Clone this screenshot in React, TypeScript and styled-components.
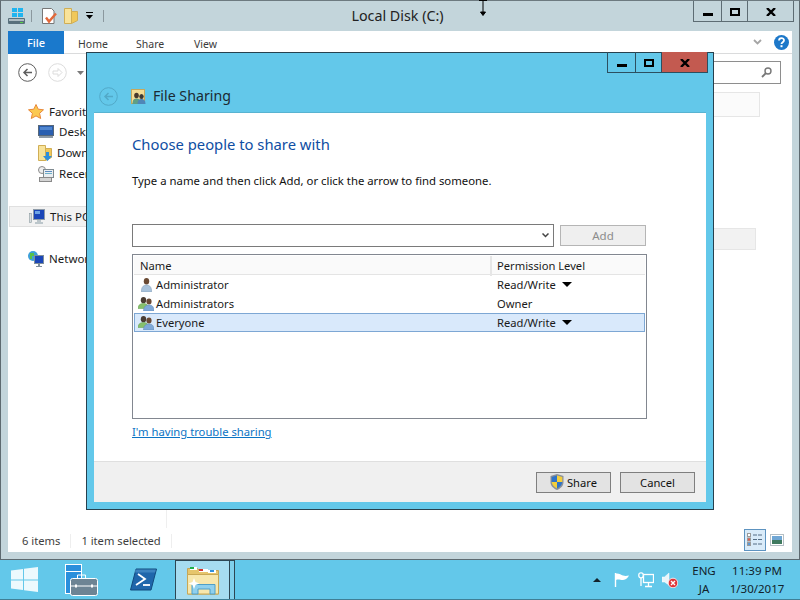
import * as React from "react";
import styled, { createGlobalStyle } from "styled-components";

const GlobalStyle = createGlobalStyle`
  html, body {
    margin: 0;
    padding: 0;
    width: 800px;
    height: 600px;
    overflow: hidden;
  }
  body {
    font-family: "Noto Sans", "Open Sans", sans-serif;
    font-size: 11.2px;
    color: #1a1a1a;
  }
  * { box-sizing: border-box; }
  svg { flex: none; display: block; }
`;

const Desktop = styled.div`
  position: relative;
  width: 800px;
  height: 600px;
  display: flex;
  flex-direction: column;
  background: #63c8ea;
  overflow: hidden;
`;

/* explorer window behind the dialog */
const Explorer = styled.div`
  height: 560px;
  background: #c3d5db;
  border: 1px solid #5e6a70;
  border-top-color: #6d7a80;
  display: flex;
  flex-direction: column;
  padding: 0 7px 7px 7px;
`;

const TitleBar = styled.div`
  height: 30px;
  display: grid;
  grid-template-columns: 1fr auto 1fr;
  align-items: start;
`;

const Qat = styled.div`
  display: flex;
  align-items: center;
  height: 30px;
  padding-bottom: 1px;
`;

const QatSep = styled.span<{ $ml: number }>`
  width: 1px;
  height: 12px;
  background: #8b989e;
  margin-left: ${p => p.$ml}px;
`;

const QatSlot = styled.span<{ $ml: number }>`
  display: block;
  margin-left: ${p => p.$ml}px;
`;

const WindowTitle = styled.div`
  font-size: 14.3px;
  line-height: 29px;
  color: #222;
  margin-left: -5px;
`;

const CaptionGroup = styled.div`
  justify-self: end;
  display: flex;
  height: 21px;
  margin-right: -2px;
  color: #5d6c73;
  border: 1px solid currentColor;
  border-top: none;
`;

const CaptionBtn = styled.div<{ $w: number; $close?: boolean }>`
  width: ${p => p.$w}px;
  padding-top: 1px;
  display: flex;
  align-items: center;
  justify-content: center;
  background: ${p => (p.$close ? "#c35a50" : "transparent")};
  & + & { border-left: 1px solid currentColor; }
`;

const Ribbon = styled.div`
  height: 23px;
  display: flex;
  align-items: stretch;
  background: #fff;
  border-bottom: 1px solid #dadbdc;
`;

const FileTab = styled.div`
  width: 56px;
  margin-bottom: -1px;
  background: #1a79cc;
  color: #fff;
  display: flex;
  align-items: center;
  justify-content: center;
  font-size: 11px;
  font-weight: 500;
`;

const RibbonTab = styled.div`
  width: 58px;
  padding-left: 14px;
  padding-top: 6px;
  font-size: 10.5px;
  color: #3b3b3b;
`;

const RibbonRight = styled.div`
  margin-left: auto;
  display: flex;
  align-items: center;
  gap: 12px;
  padding-right: 3px;
`;

const ExplorerBody = styled.div`
  flex: 1;
  background: #fff;
  display: flex;
  flex-direction: column;
  min-height: 0;
`;

const NavRow = styled.div`
  height: 38px;
  display: flex;
  align-items: center;
  padding: 0 11px 1px 10px;
`;

const NavSlot = styled.span<{ $ml: number }>`
  display: block;
  margin-left: ${p => p.$ml}px;
`;

const SearchBox = styled.div`
  margin-left: auto;
  width: 70px;
  height: 23px;
  border: 1px solid #8e8e8e;
  display: flex;
  align-items: center;
  justify-content: flex-end;
  padding-right: 8px;
`;

const Main = styled.div`
  flex: 1;
  display: flex;
  min-height: 0;
`;

const Sidebar = styled.div`
  width: 159px;
  padding-top: 9px;
  display: flex;
  flex-direction: column;
  border-right: 1px solid #efefef;
`;

const NavItem = styled.div<{ $top?: number; $active?: boolean; $indent?: boolean }>`
  height: 21px;
  margin-top: ${p => p.$top ?? 0}px;
  margin-left: ${p => (p.$active ? 1 : 0)}px;
  padding-left: ${p => (p.$active ? 19 : p.$indent ? 30 : 20)}px;
  display: flex;
  align-items: center;
  gap: 5px;
  white-space: nowrap;
  font-size: 11.5px;
  background: ${p => (p.$active ? "#f2f2f2" : "transparent")};
  border: ${p => (p.$active ? "1px solid #e0e0e0" : "none")};
  border-right: none;
`;

const FilePane = styled.div`
  flex: 1;
  display: flex;
  flex-direction: column;
  align-items: flex-end;
`;

const GhostCard = styled.div<{ $right: number; $top: number; $h: number; $bg: string }>`
  width: 200px;
  height: ${p => p.$h}px;
  margin-right: ${p => p.$right}px;
  margin-top: ${p => p.$top}px;
  background: ${p => p.$bg};
  border: 1px solid #e6e6e6;
`;

const StatusBar = styled.div`
  height: 24px;
  flex: none;
  padding: 2px 0 0 14px;
  display: flex;
  align-items: center;
  color: #3e3e3e;
`;

const StatusCell = styled.span`
  padding-right: 10px;
  margin-right: 10px;
  border-right: 1px solid #eeeeee;
  line-height: 14px;
`;

const ViewButtons = styled.div`
  margin-left: auto;
  display: flex;
  align-items: center;
  padding-right: 4px;
  margin-bottom: 2px;
`;

const ViewBtn = styled.div<{ $active?: boolean }>`
  width: 22px;
  height: 22px;
  display: flex;
  align-items: center;
  justify-content: center;
  background: ${p => (p.$active ? "#d9ebf9" : "transparent")};
  border: ${p => (p.$active ? "1px solid #5d93c0" : "none")};
`;

/* dialog floats over the explorer window */
const Dialog = styled.div`
  position: absolute;
  left: 86px;
  top: 52px;
  width: 628px;
  height: 458px;
  background: #63c8ea;
  border: 1px solid #27414e;
  display: flex;
  flex-direction: column;
  padding: 0 7px 7px 7px;
`;

const DialogCaption = styled(CaptionGroup)`
  position: absolute;
  top: -1px;
  right: 5px;
  margin-right: 0;
  color: #2c4f60;
`;

const DialogHead = styled.div`
  height: 60px;
  display: flex;
  align-items: center;
  padding: 26px 0 0 5px;
  flex: none;
`;

const DialogIconSlot = styled.span`
  display: block;
  margin-left: 13px;
`;

const DialogTitle = styled.span`
  font-size: 14.2px;
  line-height: 20px;
  color: #1b2a33;
  margin-left: 7px;
`;

const DialogBody = styled.div`
  flex: 1;
  background: #fff;
  display: flex;
  flex-direction: column;
  min-height: 0;
  box-shadow: 0 -1px 0 #58b3d1;
`;

const Content = styled.div`
  flex: 1;
  padding: 19px 59px 0 38px;
  display: flex;
  flex-direction: column;
`;

const Heading = styled.div`
  font-size: 14.8px;
  line-height: 24px;
  color: #0f4ea3;
`;

const Instruction = styled.div`
  margin-top: 16px;
  line-height: 18px;
  font-size: 11.35px;
  color: #111;
`;

const PickerRow = styled.div`
  margin-top: 34px;
  display: flex;
  align-items: center;
  gap: 6px;
`;

const Combo = styled.div`
  width: 422px;
  height: 23px;
  border: 1px solid #7a7a7a;
  display: flex;
  align-items: center;
  justify-content: flex-end;
  padding-right: 4px;
`;

const Button = styled.div<{ $disabled?: boolean; $w: number }>`
  width: ${p => p.$w}px;
  height: 21px;
  display: flex;
  align-items: center;
  justify-content: center;
  gap: 3px;
  border: 1px solid ${p => (p.$disabled ? "#b5b5b5" : "#7f7f7f")};
  background: ${p => (p.$disabled ? "#efefef" : "#e3e3e3")};
  color: ${p => (p.$disabled ? "#8c8c8c" : "#111")};
  font-size: ${p => (p.$disabled ? 11.5 : 11.2)}px;
`;

const ShareList = styled.div`
  margin-top: 7px;
  width: 515px;
  height: 165px;
  border: 1px solid #828790;
  padding: 1px;
`;

const ListHeader = styled.div`
  height: 19px;
  display: grid;
  grid-template-columns: 356px 1fr;
  background: #fafafa;
  border-bottom: 1px solid #e4e4e4;
  line-height: 20px;
`;

const HeaderCell = styled.div`
  padding-left: 6px;
  & + & { border-left: 2px solid #e6e6e6; padding-left: 5px; }
`;

const ListRow = styled.div<{ $selected?: boolean }>`
  height: 19px;
  display: grid;
  grid-template-columns: 362px 1fr;
  align-items: center;
  background: ${p => (p.$selected ? "#d9e9fb" : "transparent")};
  border: 1px solid ${p => (p.$selected ? "#7da7d4" : "transparent")};
`;

const NameCell = styled.div`
  display: flex;
  align-items: center;
  gap: 2px;
  padding-left: 3px;
`;

const RowIcon = styled.span`
  width: 16px;
  display: flex;
  justify-content: center;
`;

const PermCell = styled.div`
  display: flex;
  align-items: center;
  gap: 6px;
`;

const Caret = styled.span`
  width: 0;
  height: 0;
  border-left: 5px solid transparent;
  border-right: 5px solid transparent;
  border-top: 5px solid #000;
`;

const HelpLink = styled.a`
  margin-top: 5px;
  color: #0b74c4;
  text-decoration: underline;
  font-size: 11.25px;
  line-height: 16px;
`;

const DialogFooter = styled.div`
  height: 41px;
  flex: none;
  background: #f0f0f0;
  border-top: 1px solid #dfdfdf;
  display: flex;
  justify-content: flex-end;
  align-items: center;
  gap: 9px;
  padding-right: 11px;
`;

const Taskbar = styled.div`
  flex: 1;
  display: flex;
  align-items: stretch;
  background: #63c8ea;
  border-bottom: 1px solid #3f7f96;
`;

const TaskSlot = styled.div<{ $w: number }>`
  width: ${p => p.$w}px;
  display: flex;
  align-items: center;
  justify-content: center;
`;

const ActiveTask = styled(TaskSlot)`
  background: #a6dcf0;
  border: 1px solid #2d4653;
  border-bottom: none;
`;

const TaskSliver = styled.div`
  width: 5px;
  background: #7fd0ec;
  border: 1px solid #2d4653;
  border-left: none;
  border-bottom: none;
`;

const Tray = styled.div`
  margin-left: auto;
  display: flex;
  align-items: center;
  gap: 8px;
  padding-right: 16px;
  font-size: 11.5px;
  color: #12222b;
`;

const TrayStack = styled.div<{ $w: number }>`
  width: ${p => p.$w}px;
  text-align: center;
  line-height: 18px;
  white-space: nowrap;
  display: flex;
  flex-direction: column;
  align-items: center;
`;

const TrayCaret = styled.span`
  width: 0;
  height: 0;
  margin-right: 5px;
  border-left: 4px solid transparent;
  border-right: 4px solid transparent;
  border-bottom: 4px solid #12222b;
`;

/* mouse pointer caught in the screenshot */
const Pointer = styled.svg`
  position: absolute;
  left: 479px;
  top: 0;
`;

const CaptionMin = () => (
  <svg width="10" height="8"><rect width="10" height="3" y="5" fill="#000" /></svg>
);
const CaptionMax = () => (
  <svg width="10" height="8"><rect x="1" y="1" width="8" height="6" fill="none" stroke="#000" strokeWidth="2" /></svg>
);
const CaptionX = () => (
  <svg width="10" height="8"><path d="M1 0l8 8M9 0l-8 8" stroke="#000" strokeWidth="2.400" /></svg>
);

const DriveIcon = () => (
  <svg width="17" height="16" viewBox="0 0 17 16">
    <rect x="4" y="0" width="5" height="4" fill="#1fb4ef" />
    <rect x="10" y="0" width="5" height="4" fill="#1fb4ef" />
    <rect x="4" y="5" width="5" height="4" fill="#1fb4ef" />
    <rect x="10" y="5" width="5" height="4" fill="#1fb4ef" />
    <rect x="0" y="10" width="17" height="6" rx="1" fill="#58707c" />
    <rect x="1" y="11" width="15" height="2" fill="#aebdc4" />
    <rect x="12" y="14" width="3" height="1" fill="#5ad04a" />
  </svg>
);

const PropsIcon = () => (
  <svg width="16" height="16" viewBox="0 0 16 16">
    <path d="M.5.5h9l2.500 2.500v12.500H.5z" fill="#fff" stroke="#777" />
    <path d="M4 9.500l3 4 7-8" fill="none" stroke="#e2683a" strokeWidth="2.400" />
  </svg>
);

const FolderIcon = ({ arrow }: { arrow?: boolean }) => (
  <svg width="14" height="16" viewBox="0 0 14 16">
    <path d="M.5.5h7v15h-7z" fill="#f8e39a" stroke="#d0ae55" />
    <path d="M7.500 3.500l6 0v9l-6 3z" fill="#f0c85a" stroke="#d0ae55" />
    {arrow && <path d="M8 7h3v4h3l-4.500 5L5 11h3z" fill="#2f8fdc" />}
  </svg>
);

const BackArrow = ({ color = "#5e5e5e" }: { color?: string }) => (
  <svg width="19" height="19" viewBox="0 0 19 19">
    <circle cx="9.500" cy="9.500" r="8.800" fill="none" stroke={color} />
    <path d="M14 9.500H6M9.500 6L6 9.500 9.500 13" fill="none" stroke={color} strokeWidth="1.500" />
  </svg>
);

const ForwardArrow = () => (
  <svg width="19" height="19" viewBox="0 0 19 19">
    <circle cx="9.500" cy="9.500" r="8.800" fill="none" stroke="#dcdcdc" />
    <path d="M5 8h5V5.500l4 4-4 4V11H5z" fill="none" stroke="#dcdcdc" />
  </svg>
);

const SmallCaret = () => (
  <svg width="7" height="4"><path d="M0 0h7L3.500 4z" fill="#7a7a7a" /></svg>
);

const QatCaret = () => (
  <svg width="7" height="7"><path d="M0 0h7v1H0zM0 3h7L3.500 7z" fill="#000" /></svg>
);

const RibbonChevron = () => (
  <svg width="9" height="6"><path d="M1 1l3.500 3.500L8 1" fill="none" stroke="#a5a5a5" strokeWidth="1.800" /></svg>
);

const ComboChevron = () => (
  <svg width="7" height="5"><path d="M.5.500l3 3 3-3" fill="none" stroke="#444" strokeWidth="1.500" /></svg>
);

const HelpIcon = () => (
  <svg width="15" height="15" viewBox="0 0 15 15">
    <circle cx="7.500" cy="7.500" r="7.500" fill="#1d78c9" />
    <path d="M5 5.500c0-3.200 5-3.200 5-.2 0 2-2.500 1.800-2.500 3.800" fill="none" stroke="#fff" strokeWidth="1.800" />
    <rect x="6.500" y="10.200" width="2" height="2" fill="#fff" />
  </svg>
);

const SearchIcon = () => (
  <svg width="11" height="11" viewBox="0 0 11 11">
    <circle cx="7" cy="4" r="3" fill="none" stroke="#777" strokeWidth="1.400" />
    <path d="M5 6l-4 4" stroke="#777" strokeWidth="1.800" />
  </svg>
);

const StarIcon = () => (
  <svg width="16" height="15" viewBox="0 0 16 15">
    <path d="M8 .5l2.200 4.700 5.300.600-3.900 3.500 1.100 5.200L8 11.900l-4.700 2.600 1.100-5.200L.5 5.800l5.300-.6z" fill="#fbc951" stroke="#e8883a" />
  </svg>
);

const MonitorIcon = () => (
  <svg width="16" height="13" viewBox="0 0 16 13">
    <rect x=".5" y=".5" width="15" height="10" fill="#2a5fb0" stroke="#56677a" />
    <rect x="2" y="2" width="12" height="3" fill="#4f86d0" />
    <rect x="1" y="11" width="14" height="2" fill="#8f9ba6" />
  </svg>
);

const RecentIcon = () => (
  <svg width="16" height="16" viewBox="0 0 16 16">
    <circle cx="4" cy="4" r="3.500" fill="#eee" stroke="#8a8a8a" />
    <rect x="5.500" y="3.500" width="10" height="8" fill="#eaeef1" stroke="#7f8a90" />
    <rect x="7" y="5" width="7" height="1" fill="#5b8bc0" />
    <rect x="7" y="7" width="7" height="1" fill="#6fb0c8" />
    <rect x="1.500" y="11.500" width="12" height="4" fill="#d4d4d4" stroke="#8a8a8a" />
  </svg>
);

const ThisPcIcon = () => (
  <svg width="16" height="15" viewBox="0 0 16 15">
    <rect x=".5" y="4.500" width="2" height="9" fill="#d7dde0" stroke="#8a9aa0" strokeWidth=".6" />
    <rect x="4.500" y=".5" width="11" height="10" fill="#1b46b8" stroke="#8d9aa8" />
    <rect x="6" y="2" width="5" height="3" fill="#6ea4e6" />
    <path d="M8 11h4v2h2v2H6v-2h2z" fill="#bcc6cb" />
  </svg>
);

const NetworkIcon = () => (
  <svg width="16" height="16" viewBox="0 0 16 16">
    <circle cx="5" cy="5" r="5" fill="#3da0d8" />
    <path d="M2 2h4v3H4v3H2z" fill="#58c04a" />
    <rect x="6.500" y="4.500" width="9" height="8" fill="#1b46b8" stroke="#7f8f9b" />
    <path d="M10 13h2v2h2v1H8v-1h2z" fill="#7f8f9b" />
  </svg>
);

const ShareGroupIcon = () => (
  <svg width="15" height="15" viewBox="0 0 15 15">
    <rect x=".5" y=".5" width="13" height="14" fill="#f4dd96" stroke="#c8a85a" />
    <ellipse cx="5.500" cy="6.500" rx="2.300" ry="2.700" fill="#4a3a2c" />
    <path d="M1.500 15c0-5 2-5.500 4-5.500s4 .5 4 5.500z" fill="#5f9f86" />
    <ellipse cx="10.500" cy="7.500" rx="2.200" ry="2.600" fill="#3e3a36" />
    <path d="M6.500 15c0-4 2-5 4-5s4 1 4 5z" fill="#4f86b8" />
  </svg>
);

const UserIcon = () => (
  <svg width="11" height="14" viewBox="0 0 11 14">
    <ellipse cx="5.500" cy="3.300" rx="2.700" ry="3.300" fill="#6a4a34" />
    <path d="M.5 14c-.5-6 3-7 5-7s5.500 1 5 7z" fill="#a9c3dc" stroke="#7a97b2" strokeWidth=".5" />
  </svg>
);

const GroupIcon = () => (
  <svg width="16" height="14" viewBox="0 0 16 14">
    <ellipse cx="5.500" cy="3.200" rx="2.700" ry="3.100" fill="#4a3d33" />
    <path d="M0 11.500c0-4 3-5 5.500-5s5 1 5 5z" fill="#86c06c" stroke="#5e9a4a" strokeWidth=".5" />
    <ellipse cx="11" cy="4.500" rx="2.600" ry="3" fill="#6a4a34" />
    <path d="M5.500 14c0-5 3-6 5.500-6s5 1 5 6z" fill="#7fa9d8" stroke="#5d86b4" strokeWidth=".5" />
  </svg>
);

const ShieldIcon = () => (
  <svg width="14" height="16" viewBox="0 0 13 16">
    <path d="M6.500 0L13 2v6c0 4-3 6.500-6.500 8C3 14.500 0 12 0 8V2z" fill="#8a9099" />
    <path d="M6.500 1.500v6.500H1.200V3z" fill="#2f74c9" />
    <path d="M6.500 1.500L11.800 3v5H6.500z" fill="#f4cf3c" />
    <path d="M1.200 8h5.300v6.500C3.500 13 1.500 11 1.200 8z" fill="#f4cf3c" />
    <path d="M6.500 8h5.300c-.3 3-2.300 5-5.300 6.500z" fill="#2f74c9" />
  </svg>
);

const DetailsViewIcon = () => (
  <svg width="16" height="14" viewBox="0 0 16 14">
    <rect x=".5" y=".5" width="3" height="3" fill="#fff" stroke="#9a9a9a" />
    <rect x=".5" y="5" width="3" height="3" fill="#e15b4a" stroke="#9a9a9a" />
    <rect x=".5" y="9.500" width="3" height="3" fill="#5b9ad8" stroke="#9a9a9a" />
    <path d="M6 2h4M11 2h4M6 6.500h4M11 6.500h4M6 11h4M11 11h4" stroke="#556d85" />
  </svg>
);

const LargeViewIcon = () => (
  <svg width="14" height="12" viewBox="0 0 14 12">
    <rect x=".5" y=".5" width="13" height="11" fill="#fff" stroke="#b5bfc5" />
    <rect x="2" y="2" width="10" height="4" fill="#6fa6d4" />
    <rect x="2" y="6" width="10" height="4" fill="#3f7a5f" />
  </svg>
);

const StartIcon = () => (
  <svg width="28" height="25" viewBox="0 0 28 25">
    <path d="M0 3.500L12 2v10.500H0zM13 1.800L27 0v12.500H13zM0 13.500h12V23L0 21.500zM13 13.500h14V25l-14-1.800z" fill="#fff" fillOpacity=".88" />
  </svg>
);

const ServerManagerIcon = () => (
  <svg width="33" height="32" viewBox="0 0 33 32">
    <rect x=".5" y=".5" width="16" height="29" fill="#2a8fdc" stroke="#fff" />
    <rect x="1" y="7" width="15" height="1" fill="#fff" />
    <path d="M12.500 15v-4h8v4" fill="none" stroke="#fff" />
    <rect x="5.500" y="14.500" width="27" height="17" rx="2" fill="#6d8494" stroke="#fff" />
    <path d="M6 22h26" stroke="#fff" />
    <rect x="10" y="20.500" width="2" height="3" fill="#fff" />
    <rect x="26" y="20.500" width="2" height="3" fill="#fff" />
  </svg>
);

const PowerShellIcon = () => (
  <svg width="27" height="23" viewBox="0 0 27 23">
    <path d="M6 1h20.500L21 22H.5z" fill="#1f66ab" stroke="#124a7d" />
    <path d="M5 1.500h21l-1 3H4.500z" fill="#5a9fd6" fillOpacity=".5" />
    <path d="M8 6l7 5-9 6" fill="none" stroke="#fff" strokeWidth="1.800" />
    <path d="M13 17h7" stroke="#fff" strokeWidth="1.800" />
  </svg>
);

const ExplorerFolderIcon = () => (
  <svg width="32" height="29" viewBox="0 0 32 29">
    <path d="M.5 5V2.500h10l2 2h19V28H.5z" fill="#e6c56c" stroke="#c4a456" />
    <rect x="3" y="1" width="7" height="3" fill="#fff" />
    <rect x="3" y="1" width="4" height="2" fill="#1fb04a" />
    <rect x="12" y="3" width="9" height="3" fill="#fff" />
    <rect x="12" y="3" width="4" height="2" fill="#d5352e" />
    <rect x="21" y="4" width="8" height="3" fill="#fff" />
    <rect x="23" y="4" width="4" height="2" fill="#2f8fdc" />
    <path d="M.5 8.500h31V28H.5z" fill="#f7e7ad" stroke="#c9a855" />
    <path d="M5 28v-9.500h23V28h-5v-5H11v5z" fill="#8fd0ee" stroke="#4f9fc8" />
    <path d="M7 12l1.500 4 4 1.500-4 1.500L7 23l-1.500-4-4-1.500 4-1.500z" fill="#fff" />
  </svg>
);

const FlagIcon = () => (
  <svg width="16" height="16" viewBox="0 0 16 16">
    <path d="M1.500 1v14" stroke="#fff" strokeWidth="1.400" />
    <path d="M2 1.500c3-.5 5 1.500 7 2s3 .5 6 0c-1 2-3 4.500-6 4.500S4 7 2 8z" fill="#fff" />
  </svg>
);

const NetTrayIcon = () => (
  <svg width="16" height="16" viewBox="0 0 16 16">
    <rect x="5.500" y="2.500" width="10" height="8" fill="none" stroke="#fff" strokeWidth="1.300" />
    <rect x=".8" y=".8" width="4.400" height="5" rx="2" fill="#63c8ea" stroke="#fff" strokeWidth="1.300" />
    <path d="M3 6v8M10.500 11v3M7 14.500h7" stroke="#fff" strokeWidth="1.300" />
  </svg>
);

const SoundTrayIcon = () => (
  <svg width="16" height="16" viewBox="0 0 16 16">
    <path d="M0 5h2.500L7 1v12L2.500 10H0z" fill="#eaf5fa" stroke="#fff" strokeWidth=".5" />
    <circle cx="11" cy="11" r="4.800" fill="#e0343a" stroke="#fff" strokeWidth=".8" />
    <path d="M9 9l4 4M13 9l-4 4" stroke="#fff" strokeWidth="1.400" />
  </svg>
);

export default function App() {
  return (
    <>
      <GlobalStyle />
      <Desktop>
        <Explorer>
          <TitleBar>
            <Qat>
              <DriveIcon />
              <QatSep $ml={6} />
              <QatSlot $ml={10}><PropsIcon /></QatSlot>
              <QatSlot $ml={6}><FolderIcon /></QatSlot>
              <QatSlot $ml={8}><QatCaret /></QatSlot>
              <QatSep $ml={10} />
            </Qat>
            <WindowTitle>Local Disk (C:)</WindowTitle>
            <CaptionGroup>
              <CaptionBtn $w={27}><CaptionMin /></CaptionBtn>
              <CaptionBtn $w={26}><CaptionMax /></CaptionBtn>
              <CaptionBtn $w={46}><CaptionX /></CaptionBtn>
            </CaptionGroup>
          </TitleBar>
          <ExplorerBody>
            <Ribbon>
              <FileTab>File</FileTab>
              <RibbonTab>Home</RibbonTab>
              <RibbonTab>Share</RibbonTab>
              <RibbonTab>View</RibbonTab>
              <RibbonRight>
                <RibbonChevron />
                <HelpIcon />
              </RibbonRight>
            </Ribbon>
            <NavRow>
              <BackArrow />
              <NavSlot $ml={11}><ForwardArrow /></NavSlot>
              <NavSlot $ml={10}><SmallCaret /></NavSlot>
              <SearchBox><SearchIcon /></SearchBox>
            </NavRow>
            <Main>
              <Sidebar>
                <NavItem><StarIcon />Favorites</NavItem>
                <NavItem $indent $top={-1}><MonitorIcon />Desktop</NavItem>
                <NavItem $indent><FolderIcon arrow />Downloads</NavItem>
                <NavItem $indent><RecentIcon />Recent places</NavItem>
                <NavItem $top={22} $active><ThisPcIcon />This PC</NavItem>
                <NavItem $top={21}><NetworkIcon />Network</NavItem>
              </Sidebar>
              <FilePane>
                <GhostCard $right={32} $top={0} $h={25} $bg="#fbfbfb" />
                <GhostCard $right={36} $top={111} $h={22} $bg="#f2f2f2" />
              </FilePane>
            </Main>
            <StatusBar>
              <StatusCell>6 items</StatusCell>
              <StatusCell>1 item selected</StatusCell>
              <ViewButtons>
                <ViewBtn $active><DetailsViewIcon /></ViewBtn>
                <ViewBtn><LargeViewIcon /></ViewBtn>
              </ViewButtons>
            </StatusBar>
          </ExplorerBody>
        </Explorer>

        <Taskbar>
          <TaskSlot $w={50}><StartIcon /></TaskSlot>
          <TaskSlot $w={62}><ServerManagerIcon /></TaskSlot>
          <TaskSlot $w={63}><PowerShellIcon /></TaskSlot>
          <ActiveTask $w={55}><ExplorerFolderIcon /></ActiveTask>
          <TaskSliver />
          <Tray>
            <TrayCaret />
            <FlagIcon />
            <NetTrayIcon />
            <SoundTrayIcon />
            <TrayStack $w={36}><span>ENG</span><span>JA</span></TrayStack>
            <TrayStack $w={54}><span>11:39 PM</span><span>1/30/2017</span></TrayStack>
          </Tray>
        </Taskbar>

        <Pointer width="9" height="17" viewBox="0 0 9 17">
          <path d="M0 .5h8M4 0v14M1.500 12h5L4 15.500z" fill="#000" stroke="#000" />
        </Pointer>

        <Dialog>
          <DialogCaption>
            <CaptionBtn $w={27}><CaptionMin /></CaptionBtn>
            <CaptionBtn $w={26}><CaptionMax /></CaptionBtn>
            <CaptionBtn $w={46} $close><CaptionX /></CaptionBtn>
          </DialogCaption>
          <DialogHead>
            <BackArrow color="#52a9c8" />
            <DialogIconSlot><ShareGroupIcon /></DialogIconSlot>
            <DialogTitle>File Sharing</DialogTitle>
          </DialogHead>
          <DialogBody>
            <Content>
              <Heading>Choose people to share with</Heading>
              <Instruction>Type a name and then click Add, or click the arrow to find someone.</Instruction>
              <PickerRow>
                <Combo><ComboChevron /></Combo>
                <Button $disabled $w={86}>Add</Button>
              </PickerRow>
              <ShareList>
                <ListHeader>
                  <HeaderCell>Name</HeaderCell>
                  <HeaderCell>Permission Level</HeaderCell>
                </ListHeader>
                <ListRow>
                  <NameCell><RowIcon><UserIcon /></RowIcon>Administrator</NameCell>
                  <PermCell>Read/Write<Caret /></PermCell>
                </ListRow>
                <ListRow>
                  <NameCell><RowIcon><GroupIcon /></RowIcon>Administrators</NameCell>
                  <PermCell>Owner</PermCell>
                </ListRow>
                <ListRow $selected>
                  <NameCell><RowIcon><GroupIcon /></RowIcon>Everyone</NameCell>
                  <PermCell>Read/Write<Caret /></PermCell>
                </ListRow>
              </ShareList>
              <HelpLink>I'm having trouble sharing</HelpLink>
            </Content>
            <DialogFooter>
              <Button $w={75}><ShieldIcon />Share</Button>
              <Button $w={75}>Cancel</Button>
            </DialogFooter>
          </DialogBody>
        </Dialog>
      </Desktop>
    </>
  );
}
